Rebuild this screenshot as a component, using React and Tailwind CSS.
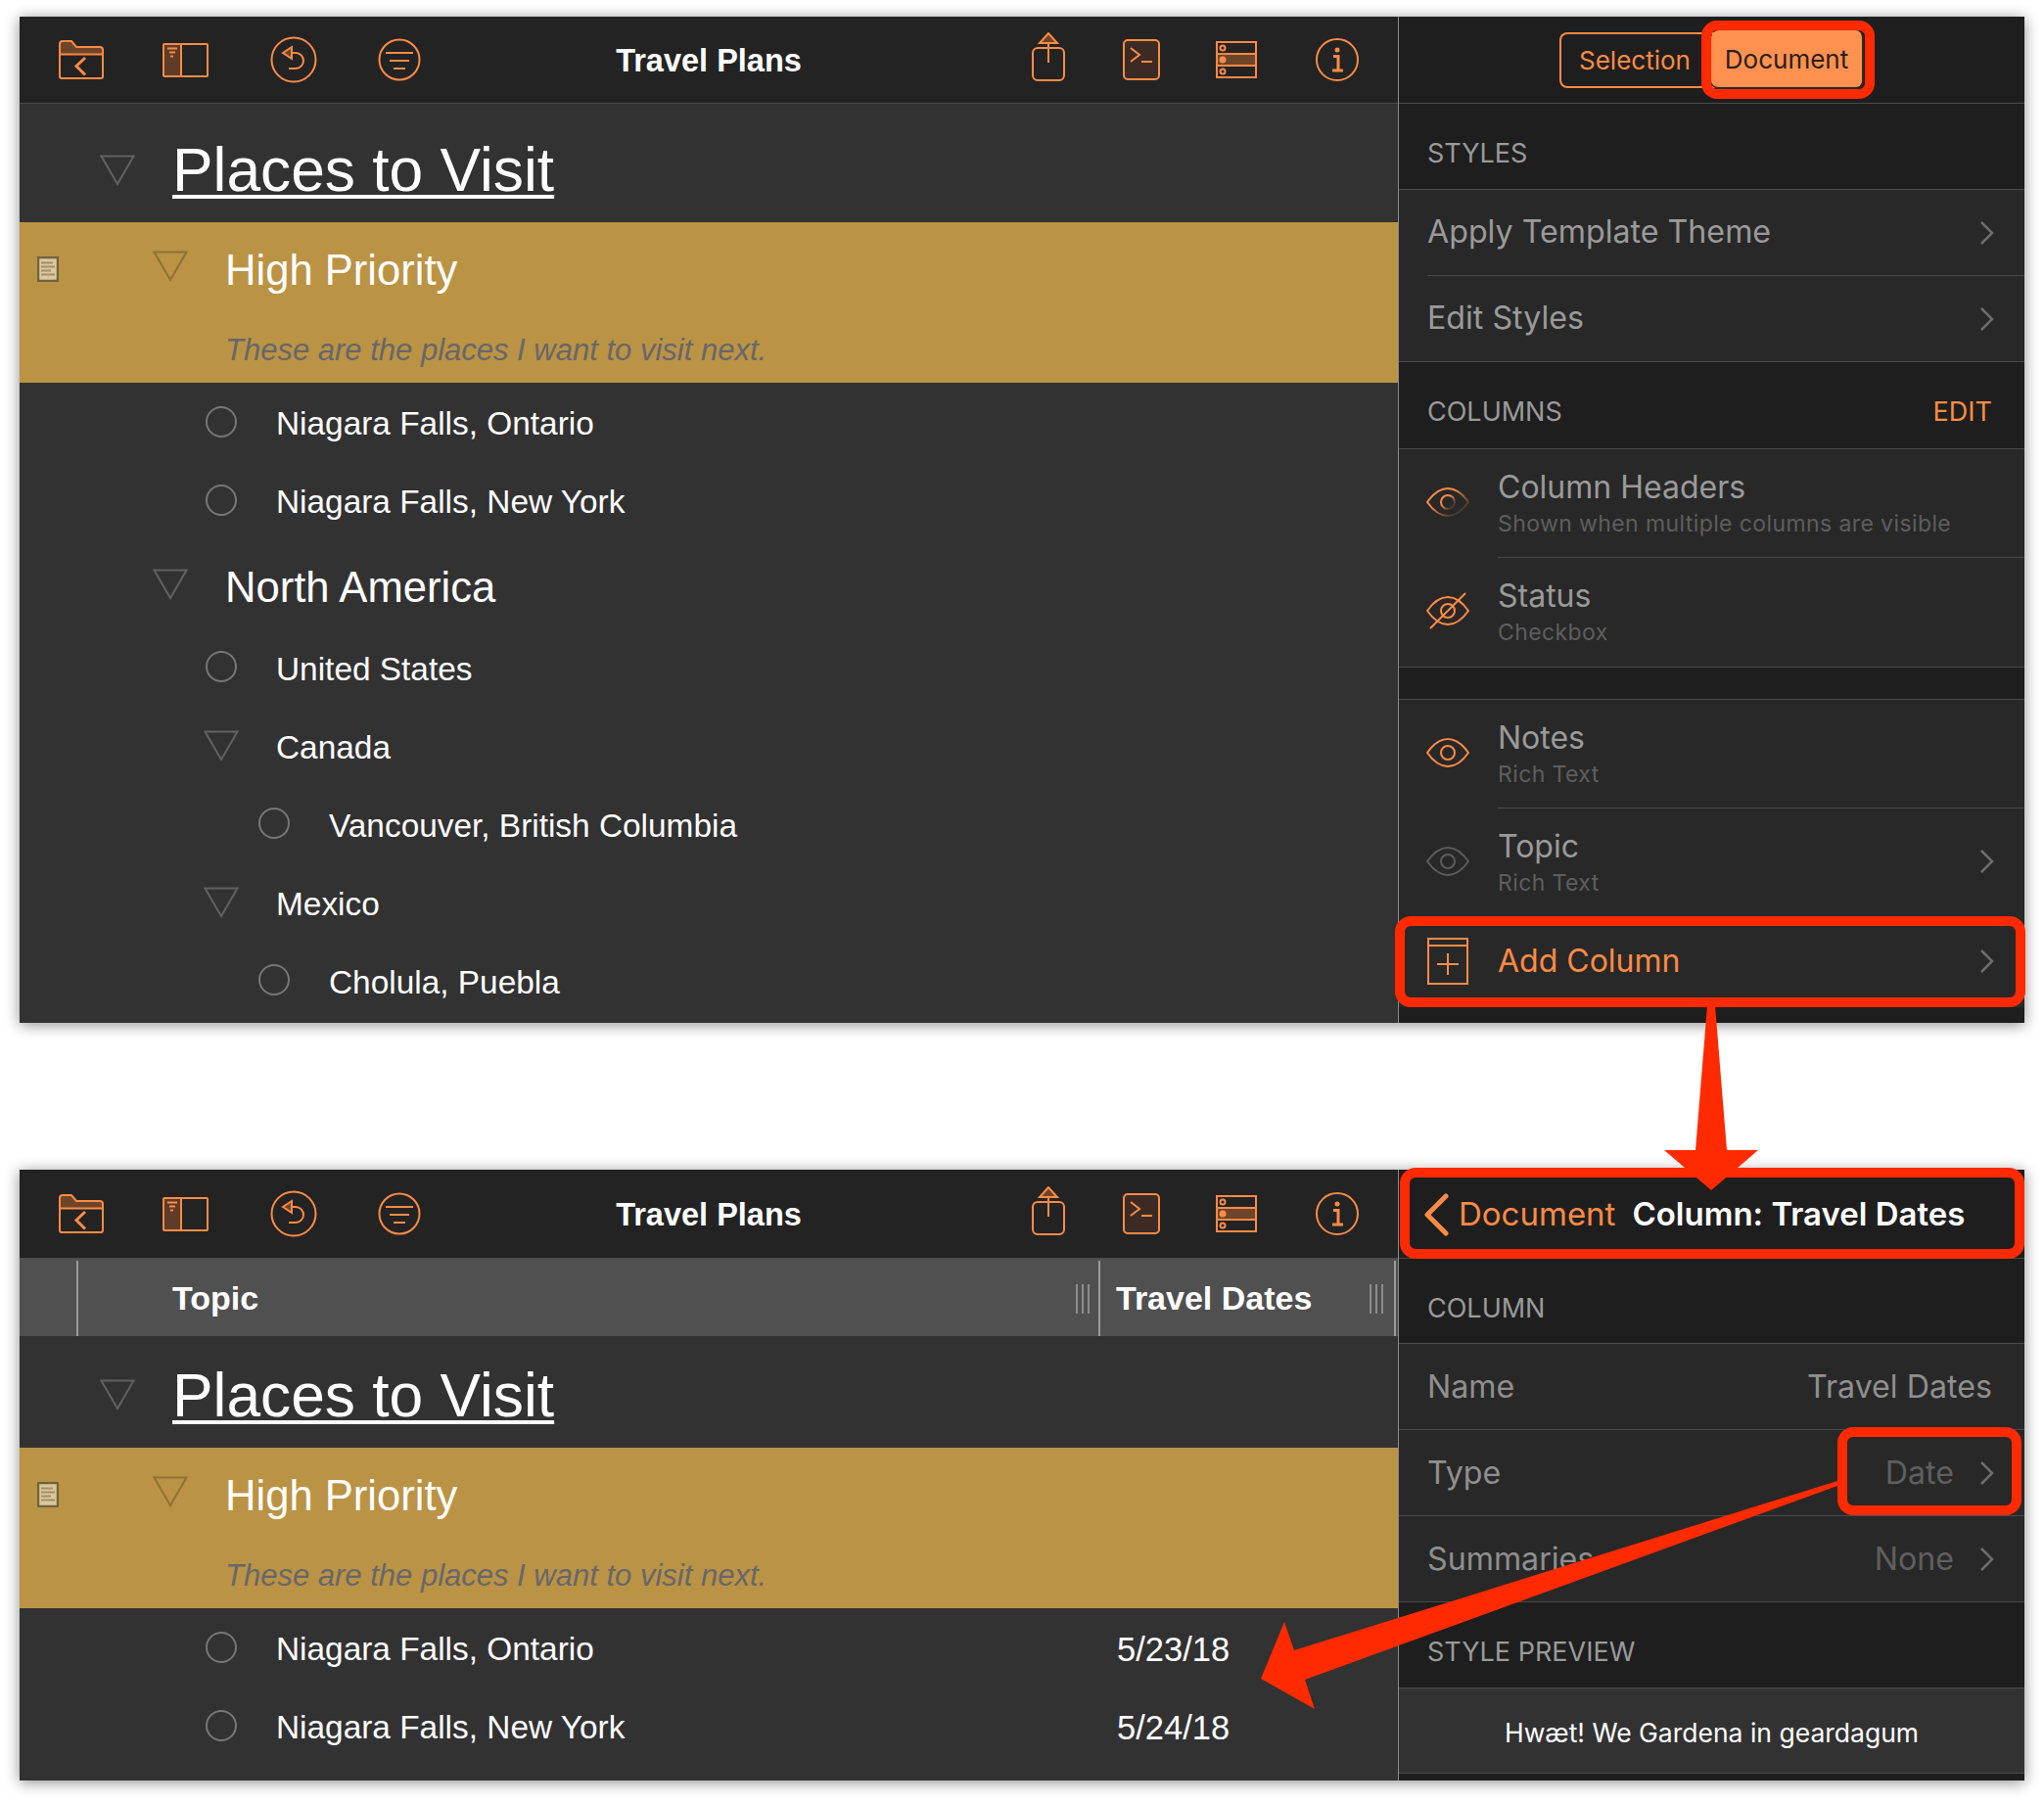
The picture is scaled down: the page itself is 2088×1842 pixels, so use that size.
import React from 'react';

const ORANGE = '#fb8b45';

function FolderIcon() {
  return (
    <svg width="46" height="40" viewBox="0 0 46 40" fill="none" stroke={ORANGE} strokeWidth="2">
      <path d="M1 14V4a3 3 0 0 1 3-3h9l5 6h24a3 3 0 0 1 3 3v4z" fill="#6e4529" stroke="none" />
      <path d="M1 37V4a3 3 0 0 1 3-3h9l5 6h24a3 3 0 0 1 3 3v27a2 2 0 0 1-2 2H3a2 2 0 0 1-2-2zM1 14.500h44" />
      <path d="M27 18l-9 8.500 9 9" strokeWidth="3" />
    </svg>
  );
}

function SidebarIcon() {
  return (
    <svg width="47" height="35" viewBox="0 0 47 35" fill="none" stroke={ORANGE} strokeWidth="2">
      <rect x="1" y="1" width="18" height="33" fill="#5f3c28" stroke="none" />
      <rect x="1" y="1" width="45" height="33" rx="1" />
      <path d="M19 1v33M5 5.500h10M7 9.500h6M8 13.500h3" />
    </svg>
  );
}

function UndoIcon() {
  return (
    <svg width="48" height="48" viewBox="0 0 48 48" fill="none" stroke={ORANGE} strokeWidth="2">
      <circle cx="24" cy="24" r="22.500" />
      <path d="M13 17l9-6v12z" fill="#6e4529" />
      <path d="M22 17h4a8 8 0 0 1 0 16h-7" />
    </svg>
  );
}

function FilterIcon() {
  return (
    <svg width="44" height="44" viewBox="0 0 44 44" fill="none" stroke={ORANGE} strokeWidth="2">
      <circle cx="22" cy="22" r="20.500" />
      <path d="M8 15h28M12 23h20M16 31h12" />
    </svg>
  );
}

function ShareIcon() {
  return (
    <svg width="34" height="50" viewBox="0 0 34 50" fill="none" stroke={ORANGE} strokeWidth="2">
      <rect x="1" y="16" width="32" height="33" rx="5" />
      <path d="M17 1L8 11h18z" fill="#6e4529" />
      <path d="M17 11v20" />
    </svg>
  );
}

function TerminalIcon() {
  return (
    <svg width="38" height="42" viewBox="0 0 38 42" fill="none" stroke={ORANGE} strokeWidth="2">
      <rect x="1" y="1" width="36" height="40" rx="4" fill="#3b2b24" />
      <path d="M8 9l9 7-9 7M19 23h11" />
    </svg>
  );
}

function TableIcon() {
  return (
    <svg width="42" height="38" viewBox="0 0 42 38" fill="none" stroke={ORANGE} strokeWidth="2">
      <rect x="1" y="13" width="40" height="12" fill="#6e4529" stroke="none" />
      <rect x="1" y="1" width="40" height="36" />
      <path d="M1 13h40M1 25h40" />
      <circle cx="7" cy="7" r="2.500" />
      <circle cx="7" cy="19" r="2.500" fill={ORANGE} />
      <circle cx="7" cy="31" r="2.500" />
    </svg>
  );
}

function InfoIcon() {
  return (
    <svg width="44" height="44" viewBox="0 0 44 44" fill="none" stroke={ORANGE} strokeWidth="2">
      <circle cx="22" cy="22" r="21" />
      <circle cx="22" cy="12" r="2.500" fill={ORANGE} stroke="none" />
      <path d="M18 18.500h5v14.500M17 33h11" strokeWidth="3" />
    </svg>
  );
}

function Triangle({ gold, lift = '-mt-1' }) {
  return (
    <svg width="36" height="32" viewBox="0 0 36 32" fill="none" className={`shrink-0 ${lift}`} stroke={gold ? '#8f7238' : '#616161'} strokeWidth="2">
      <path d="M1.500 1.500h33L18 30z" />
    </svg>
  );
}

function Circle() {
  return (
    <div className="-mt-1.5 flex w-9 shrink-0 justify-center">
      <div className="size-8 rounded-full border-2 border-[#777777]" />
    </div>
  );
}

function NoteIcon() {
  return (
    <svg width="22" height="26" viewBox="0 0 22 26" className="shrink-0">
      <rect x="1" y="1" width="20" height="24" fill="#dcc89c" stroke="#6f6340" strokeWidth="2.500" />
      <path d="M4 6.500h12M4 10.500h14M4 14.500h10M4 18.500h14" stroke="#a09068" strokeWidth="2" />
    </svg>
  );
}

function Chevron({ className }) {
  return (
    <svg width="16" height="26" viewBox="0 0 16 26" fill="none" stroke="#6e6e6e" strokeWidth="2.500" className={className}>
      <path d="M2 2l11 11L2 24" />
    </svg>
  );
}

function Eye({ kind }) {
  const stroke = kind === 'muted' ? '#5c5c5c' : kind === 'fade' ? 'url(#eyeFade)' : ORANGE;
  return (
    <svg width="44" height="38" viewBox="0 0 44 38" fill="none" stroke={stroke} strokeWidth="2" className="-mt-[3px] shrink-0">
      <defs>
        <linearGradient id="eyeFade" x1="0" y1="0" x2="1" y2="1">
          <stop offset="0.35" stopColor={ORANGE} />
          <stop offset="0.8" stopColor="#4a3a30" />
        </linearGradient>
      </defs>
      <path d="M1 19C8 9 15 5 22 5s14 4 21 14c-7 10-14 14-21 14S8 29 1 19z" />
      <circle cx="22" cy="19" r="7" />
      {kind === 'off' && <path d="M4 37L40 1" />}
    </svg>
  );
}

function Toolbar({ title }) {
  return (
    <div className="grid h-full grid-cols-[1fr_auto_1fr] items-center border-b border-[#4a4a4a] bg-[#232323] px-[40px]">
      <div className="flex items-center">
        <FolderIcon />
        <div className="ml-[60px]"><SidebarIcon /></div>
        <div className="ml-[63px]"><UndoIcon /></div>
        <div className="ml-[62px]"><FilterIcon /></div>
      </div>
      <div className="pt-[2px] font-['Liberation_Sans',sans-serif] text-[32.5px] font-bold text-white">{title}</div>
      <div className="flex items-center justify-end">
        <div className="-mt-[6px]"><ShareIcon /></div>
        <div className="ml-[59px]"><TerminalIcon /></div>
        <div className="ml-[57px]"><TableIcon /></div>
        <div className="ml-[60px]"><InfoIcon /></div>
      </div>
    </div>
  );
}

function OutlineRow({ pad, marker, text, date, top }) {
  return (
    <div className={`flex h-[80px] items-center ${top ? 'pt-[5px]' : 'pt-[2px]'}`} style={{ paddingLeft: pad }}>
      {marker === 'tri' ? <Triangle /> : <Circle />}
      <span className="ml-[38px] text-[33.4px] text-white">{text}</span>
      {date && <span className="ml-auto w-[287px] text-[34.5px] text-white">{date}</span>}
    </div>
  );
}

function TitleRow({ height }) {
  return (
    <div className={`flex items-center pl-[82px] ${height}`}>
      <Triangle lift="-mt-[2px]" />
      <span className="ml-[38px] text-[62.3px] leading-none text-white underline decoration-[4px] underline-offset-[4px]">
        Places to Visit
      </span>
    </div>
  );
}

function GoldRow() {
  return (
    <div className="h-[164px] bg-[#bb9344]">
      <div className="flex h-[96px] items-center pl-[18px]">
        <NoteIcon />
        <div className="ml-[96px] flex items-center">
          <Triangle gold lift="-mt-[6px]" />
          <span className="ml-[38px] pt-[3px] text-[43.6px] text-white">High Priority</span>
        </div>
      </div>
      <div className="flex h-[68px] items-center pl-[210px] pt-[2px] text-[31px] italic text-[#67676a]">
        These are the places I want to visit next.
      </div>
    </div>
  );
}

function SectionHead({ children, right, height = 'h-[88px]', top = 'pt-[16px]' }) {
  return (
    <div className={`flex items-center justify-between border-b border-[#4a4a4a] bg-[#1e1e1e] px-[29px] text-[27px] text-[#9a9a9a] ${height} ${top}`}>
      <span>{children}</span>
      {right && <span className="pr-[4px] text-[#fb8b45]">{right}</span>}
    </div>
  );
}

function NavRow({ label, last }) {
  return (
    <div className={`h-[88px] bg-[#282828] pl-[29px] ${last ? 'border-b border-[#4a4a4a]' : ''}`}>
      <div className={`flex h-full items-center justify-between pr-[30px] text-[32.2px] text-[#9a9a9a] ${last ? '' : 'border-b border-[#4a4a4a]'}`}>
        <span>{label}</span>
        <Chevron />
      </div>
    </div>
  );
}

function ColumnRow({ eye, label, sub, chevron, last }) {
  return (
    <div className="flex h-[111px] items-center bg-[#282828] pl-[28px]">
      <Eye kind={eye} />
      <div className={`ml-[29px] flex h-full flex-1 items-center justify-between pb-[3px] pr-[30px] ${last ? '' : 'border-b border-[#4a4a4a]'}`}>
        <div>
          <div className="text-[32px] leading-[44px] text-[#9a9a9a]">{label}</div>
          <div className="text-[23px] leading-[30px] tracking-[0.4px] text-[#5e5e5e]">{sub}</div>
        </div>
        {chevron && <Chevron />}
      </div>
    </div>
  );
}

function ValueRow({ label, value, dim, chevron }) {
  return (
    <div className="flex h-[88px] items-center justify-between border-b border-[#4a4a4a] bg-[#282828] pl-[29px] pr-[33px] pt-[1px] text-[32.2px] text-[#8f8f8f]">
      <span>{label}</span>
      <span className="flex items-center">
        <span className={dim ? 'text-[#5f5f5f]' : ''}>{value}</span>
        {chevron && <Chevron className="-mr-[3px] ml-[26px]" />}
      </span>
    </div>
  );
}

function GripLines() {
  return (
    <div className="flex h-[30px] gap-[4px]">
      <div className="w-[2px] bg-[#8d8d8d]" />
      <div className="w-[2px] bg-[#8d8d8d]" />
      <div className="w-[2px] bg-[#8d8d8d]" />
    </div>
  );
}

function TopWindow() {
  return (
    <div className="flex h-[1028px] w-[2048px] font-['Liberation_Sans',sans-serif] shadow-[0_2px_14px_rgba(0,0,0,0.45)]">
      <div className="flex w-[1408px] flex-col bg-[#323232]">
        <div className="h-[89px]"><Toolbar title="Travel Plans" /></div>
        <TitleRow height="h-[121px] pt-[16px]" />
        <GoldRow />
        <OutlineRow top pad={188} marker="circle" text="Niagara Falls, Ontario" />
        <OutlineRow top pad={188} marker="circle" text="Niagara Falls, New York" />
        <div className="flex h-[92px] items-center pl-[136px] pt-[4px]">
          <Triangle />
          <span className="ml-[38px] pt-[3px] text-[43.6px] text-white">North America</span>
        </div>
        <OutlineRow pad={188} marker="circle" text="United States" />
        <OutlineRow pad={188} marker="tri" text="Canada" />
        <OutlineRow pad={242} marker="circle" text="Vancouver, British Columbia" />
        <OutlineRow pad={188} marker="tri" text="Mexico" />
        <OutlineRow pad={242} marker="circle" text="Cholula, Puebla" />
      </div>
      <div className="flex w-[640px] flex-col border-l border-[#8a8a8a] bg-[#1e1e1e] font-['Inter',sans-serif]">
        <div className="flex h-[89px] items-center justify-center border-b border-[#4a4a4a]">
          <div className="flex h-[57px] w-[160px] items-center rounded-l-lg border-2 border-r-0 border-[#fb8b45] pl-[18px] text-[26px] text-[#fb8b45]">Selection</div>
          <div className="-ml-[5px] flex h-[60px] w-[156px] items-center justify-center rounded-lg border-b-2 border-r-2 border-[#2a2a2a] bg-[#ff9150] text-[26px] text-[#2a2018]">Document</div>
        </div>
        <SectionHead>STYLES</SectionHead>
        <NavRow label="Apply Template Theme" />
        <NavRow label="Edit Styles" last />
        <SectionHead right="EDIT" height="h-[89px]" top="pt-[15px]">COLUMNS</SectionHead>
        <ColumnRow eye="fade" label="Column Headers" sub="Shown when multiple columns are visible" />
        <ColumnRow eye="off" label="Status" sub="Checkbox" last />
        <div className="h-[34px] border-y border-[#4a4a4a] bg-[#1e1e1e]" />
        <ColumnRow eye="on" label="Notes" sub="Rich Text" />
        <ColumnRow eye="muted" label="Topic" sub="Rich Text" chevron last />
        <div className="flex h-[92px] items-center justify-between bg-[#282828] pb-[3px] pl-[29px] pr-[30px]">
          <div className="flex items-center">
            <svg width="42" height="48" viewBox="0 0 42 48" fill="none" stroke={ORANGE} strokeWidth="2">
              <rect x="1" y="1" width="40" height="46" />
              <path d="M1 8h40M21 16v22M10 27h22" />
            </svg>
            <span className="ml-[30px] text-[32px] text-[#fb8b45]">Add Column</span>
          </div>
          <Chevron />
        </div>
      </div>
    </div>
  );
}

function BottomWindow() {
  return (
    <div className="flex h-[624px] w-[2048px] font-['Liberation_Sans',sans-serif] shadow-[0_2px_14px_rgba(0,0,0,0.45)]">
      <div className="flex w-[1408px] flex-col bg-[#323232]">
        <div className="h-[91px]"><Toolbar title="Travel Plans" /></div>
        <div className="flex h-[79px] items-stretch bg-[#505050] pt-[2px] text-[34px] font-bold text-white">
          <div className="w-[60px] border-r-2 border-[#9a9a9a]" />
          <div className="flex w-[1044px] items-center justify-between border-r-2 border-[#9a9a9a] pl-[96px] pr-[9px]">
            <span>Topic</span>
            <GripLines />
          </div>
          <div className="flex flex-1 items-center justify-between border-r-2 border-[#9a9a9a] pl-[16px] pr-[11px]">
            <span>Travel Dates</span>
            <GripLines />
          </div>
          <div className="w-[2px]" />
        </div>
        <TitleRow height="h-[114px] pt-[8px]" />
        <GoldRow />
        <OutlineRow top pad={188} marker="circle" text="Niagara Falls, Ontario" date="5/23/18" />
        <OutlineRow top pad={188} marker="circle" text="Niagara Falls, New York" date="5/24/18" />
      </div>
      <div className="flex w-[640px] flex-col border-l border-[#8a8a8a] bg-[#1e1e1e] font-['Inter',sans-serif]">
        <div className="flex h-[91px] items-center border-b border-[#4a4a4a] pl-[25px] pt-[2px]">
          <svg width="26" height="44" viewBox="0 0 26 44" fill="none" stroke={ORANGE} strokeWidth="5" strokeLinecap="round" strokeLinejoin="round">
            <path d="M23 3L4 22l19 19" />
          </svg>
          <span className="ml-[10px] text-[33px] text-[#fb8b45]">Document</span>
          <span className="ml-[17px] text-[33px] font-semibold text-white">Column: Travel Dates</span>
        </div>
        <SectionHead height="h-[87px]">COLUMN</SectionHead>
        <ValueRow label="Name" value="Travel Dates" />
        <ValueRow label="Type" value="Date" dim chevron />
        <ValueRow label="Summaries" value="None" dim chevron />
        <SectionHead>STYLE PREVIEW</SectionHead>
        <div className="flex h-[87px] items-center justify-center border-b border-[#4a4a4a] bg-[#323232] pt-[6px] text-[26.5px] text-white">
          Hwæt! We Gardena in geardagum
        </div>
      </div>
    </div>
  );
}

function Callout({ className }) {
  return <div className={`absolute rounded-[16px] border-[10px] border-[#ff2a00] ${className}`} />;
}

export default function App() {
  return (
    <div className="relative h-[1842px] w-[2088px] bg-white pl-[20px] pt-[17px]">
      <TopWindow />
      <div className="mt-[150px]"><BottomWindow /></div>

      <Callout className="left-[1738px] top-[21px] h-[80px] w-[177px]" />
      <Callout className="left-[1425px] top-[936px] h-[93px] w-[644px]" />
      <Callout className="left-[1430px] top-[1193px] h-[93px] w-[638px]" />
      <Callout className="left-[1877px] top-[1458px] h-[90px] w-[188px]" />
      <svg className="absolute left-0 top-0" width="2088" height="1842" viewBox="0 0 2088 1842" fill="#ff2a00">
        <polygon points="1744,1027 1752,1027 1764,1175 1796,1175 1748,1216 1700,1175 1732,1175" />
        <polygon points="1877,1513 1322,1686 1312,1657 1288,1715 1343,1746 1333,1716 1877,1518" />
      </svg>
    </div>
  );
}
